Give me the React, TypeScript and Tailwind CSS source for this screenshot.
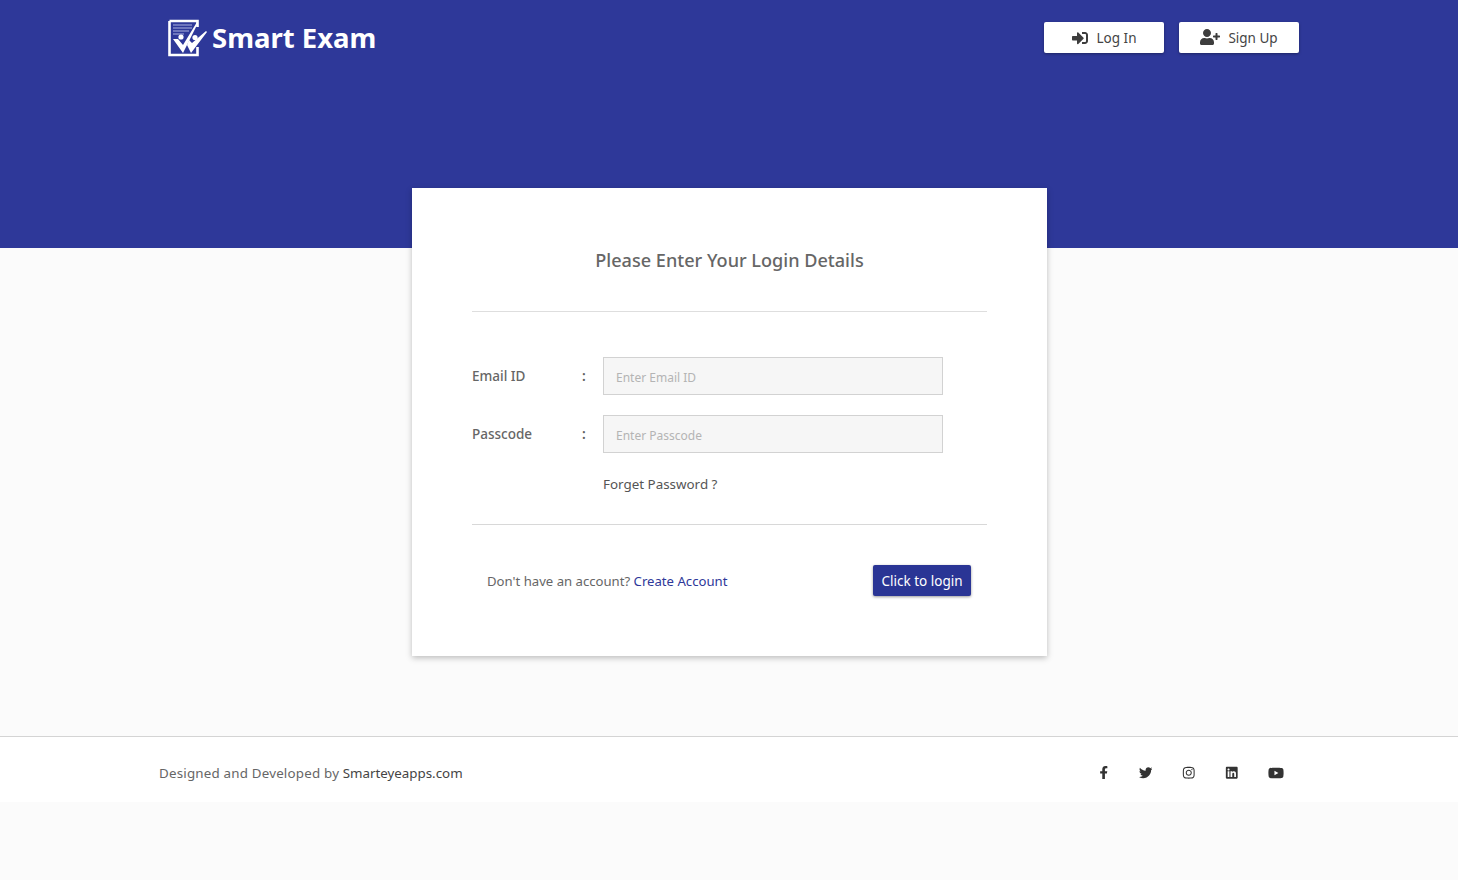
import React from 'react';
import { FaFacebookF, FaInstagram, FaLinkedin, FaSignInAlt, FaTwitter, FaUserPlus, FaYoutube } from 'react-icons/fa';

const font = "font-['Noto_Sans','Open_Sans',sans-serif]";

function Logo() {
    return (
        <svg width="40" height="38" viewBox="0 0 40 38" fill="none">
            <path d="M1.5 2h28v6M29.5 28v8h-28V2" stroke="#fff" strokeWidth="2.6" />
            <path d="M5 6h19M5 9h19M5 12h16M5 15h11" stroke="#aeb3e2" strokeWidth="1.2" />
            <circle cx="13" cy="18" r="2.6" fill="#fff" />
            <circle cx="27" cy="18.5" r="2.6" fill="#fff" />
            <path d="M5 20l10 14L30 4l-1-1-14 23-5-6z" fill="#fff" />
            <path d="M19 26l4 8 16-21-1-1-14 12-3-3z" fill="#fff" />
        </svg>
    );
}

function Field({ label, placeholder }: { label: string; placeholder: string }) {
    return (
        <div className="flex items-center">
            <label className="w-[110px] text-[13.5px] font-medium text-[#666]">{label}</label>
            <span className="w-[21px] text-[13.5px] font-semibold text-[#5f5f5f]">:</span>
            <input
                placeholder={placeholder}
                className="w-[340px] h-[38px] px-3 pt-[2px] bg-[#f6f6f6] border border-[#d2d2d2] text-[12px] placeholder:text-[#b4b4b4] outline-none"
            />
        </div>
    );
}

export default function App() {
    return (
        <div className={`min-h-[880px] bg-[#fbfbfb] ${font}`}>

            {/* Header */}
            <div className="h-[248px] bg-[#2e3899]">
                <div className="flex justify-between pl-[168px] pr-[159px] pt-[19px]">
                    <div className="flex items-center gap-[4px] h-[38px]">
                        <Logo />
                        <span className="text-[27.5px] font-bold text-white leading-none">Smart Exam</span>
                    </div>
                    <div className="flex gap-[15px] pt-[3px]">
                        <button className="w-[120px] h-[31px] flex items-center justify-center gap-[9px] bg-white rounded-[2px] text-[13.5px] text-[#444] shadow-[0_1px_3px_rgba(0,0,0,0.35)]">
                            <FaSignInAlt className="text-[16px] text-[#3d3d3d]" />
                            <span className="pt-[2px]">Log In</span>
                        </button>
                        <button className="w-[120px] h-[31px] flex items-center justify-center gap-[8px] bg-white rounded-[2px] text-[13.5px] text-[#444] shadow-[0_1px_3px_rgba(0,0,0,0.35)]">
                            <FaUserPlus className="text-[20px] text-[#3d3d3d] -mt-[2px]" />
                            <span className="pt-[2px]">Sign Up</span>
                        </button>
                    </div>
                </div>
            </div>

            {/* Card */}
            <div className="-mt-[60px] ml-[412px] w-[635px] h-[468px] bg-white shadow-[0_2px_6px_rgba(0,0,0,0.25)] relative px-[60px]">
                <h1 className="pt-[59px] h-[124px] border-b border-[#dedede] text-center text-[18.1px] font-medium text-[#666] leading-[27px]">
                    Please Enter Your Login Details
                </h1>

                <div className="flex flex-col gap-[20px] pt-[45px]">
                    <Field label="Email ID" placeholder="Enter Email ID" />
                    <Field label="Passcode" placeholder="Enter Passcode" />
                </div>

                <div className="pl-[131px] pt-[21px] h-[72px] border-b border-[#d8d8d8] text-[13.4px] text-[#555]">
                    Forget Password ?
                </div>

                <div className="flex items-center justify-between pl-[15px] pr-[16px] pt-[40px]">
                    <p className="text-[13.15px] text-[#666] pt-[3px]">
                        Don't have an account? <a className="text-[#2e3899]">Create Account</a>
                    </p>
                    <button className="w-[98px] h-[31px] pt-[1px] bg-[#2a3595] rounded-[2px] text-[13.5px] text-white shadow-[0_1px_3px_rgba(0,0,0,0.4)]">
                        Click to login
                    </button>
                </div>
            </div>

            {/* Footer */}
            <div className="mt-[80px] h-[66px] bg-white border-t border-[#d4d4d4] flex items-center justify-between pl-[159px] pr-[175px]">
                <p className="text-[13.35px] text-[#666] pt-[8px]">
                    <span className="tracking-[0.2px]">Designed and Developed by</span> <span className="text-[#444]">Smarteyeapps.com</span>
                </p>
                <div className="flex items-center gap-[29px] text-[13.5px] text-[#333] pt-[6px]">
                    <FaFacebookF />
                    <FaTwitter className="-ml-[1px] mr-[1px]" />
                    <FaInstagram />
                    <FaLinkedin />
                    <FaYoutube className="text-[16px] ml-[1px] -mr-[1px]" />
                </div>
            </div>

        </div>
    );
}
